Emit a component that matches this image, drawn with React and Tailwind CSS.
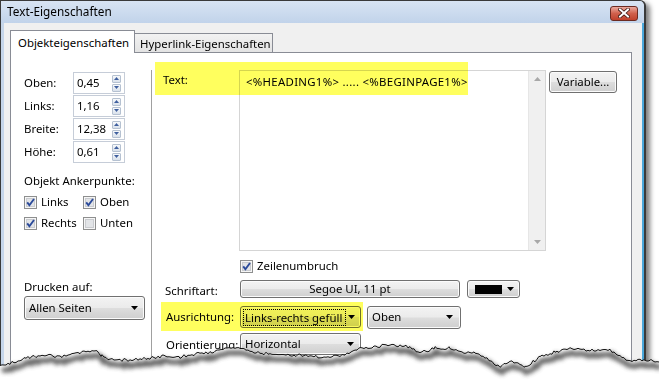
import React from 'react'

const btn = 'border border-[#707070] rounded-[3px] bg-[linear-gradient(#f3f3f3,#ebebeb_48%,#dddddd_52%,#cfcfcf)] shadow-[inset_0_0_0_1px_#fbfbfb]'

function Arrow() {
  return (
    <svg width="7" height="4" viewBox="0 0 7 4" className="shrink-0">
      <polygon points="0,0 7,0 3.5,4" fill="#000" />
    </svg>
  )
}

function Checkbox({ checked }) {
  return (
    <svg width="13" height="13" viewBox="0 0 13 13" className="shrink-0">
      <rect x="0.5" y="0.5" width="12" height="12" fill="#f6f6f6" stroke="#8e8f8f" />
      <rect x="2.5" y="2.5" width="8" height="8" fill="#e2e4e7" stroke="#c9cbcf" />
      {checked && <path d="M3.2 6.4 5.4 9.2 10 3" fill="none" stroke="#2b4a9a" strokeWidth="1.9" />}
    </svg>
  )
}

function SpinBtn({ up }) {
  return (
    <div className="w-[9px] h-[8px] border border-[#b5c1d1] rounded-[1px] bg-gradient-to-b from-[#f7f9fb] to-[#d9e1eb] flex items-center justify-center">
      <svg width="5" height="3" viewBox="0 0 5 3">
        <polygon points={up ? '0,3 5,3 2.5,0' : '0,0 5,0 2.5,3'} fill="#3f5f9e" />
      </svg>
    </div>
  )
}

function Spin({ label, value }) {
  return (
    <div className="flex items-center h-[22px]">
      <span className="w-[49px]">{label}</span>
      <div className="flex items-center w-[52px] h-[22px] border border-[#c6cdd8] bg-white pl-[3px] pr-[3px]">
        <span className="flex-1">{value}</span>
        <div className="flex flex-col gap-px">
          <SpinBtn up />
          <SpinBtn />
        </div>
      </div>
    </div>
  )
}

function Check({ label, checked, w }) {
  return (
    <div className={`flex items-center gap-[4px] ${w}`}>
      <Checkbox checked={checked} />
      <span>{label}</span>
    </div>
  )
}

function TornEdge() {
  const pts = [
    [0, 367], [10, 363], [20, 360], [30, 357], [45, 355], [60, 357], [80, 353], [95, 350], [102, 356],
    [110, 360], [130, 360], [150, 358], [165, 356], [180, 357], [200, 353], [215, 352], [225, 348],
    [240, 348], [260, 353], [280, 355], [300, 355], [320, 357], [345, 355], [360, 348], [370, 347],
    [390, 345], [410, 347], [420, 353], [435, 348], [450, 348], [460, 352], [475, 352], [490, 360],
    [500, 367], [510, 360], [525, 367], [540, 357], [555, 352], [570, 349], [590, 350], [610, 350],
    [620, 357], [630, 360], [645, 360], [659, 362],
  ]
  const line = []
  for (let i = 0; i < pts.length - 1; i++) {
    const [x0, y0] = pts[i]
    const [x1, y1] = pts[i + 1]
    for (let x = x0; x < x1; x += 2) {
      const t = (x - x0) / (x1 - x0)
      const n = Math.sin(x * 12.9898) * 43758.5453
      const j = (n - Math.floor(n) - 0.5) * 3
      line.push([x, y0 + (y1 - y0) * t + j])
    }
  }
  line.push(pts[pts.length - 1])
  const d = line.map(([x, y], i) => `${i ? 'L' : 'M'}${x.toFixed(1)} ${y.toFixed(1)}`).join(' ')
  const fill = `${d} L659 391 L0 391 Z`
  return (
    <svg className="absolute inset-0 pointer-events-none" width="659" height="391" viewBox="0 0 659 391">
      <defs>
        <filter id="blur" x="-10%" y="-50%" width="120%" height="200%">
          <feGaussianBlur stdDeviation="2.2" />
        </filter>
      </defs>
      <path d={fill} fill="#fff" />
      <path d={d} transform="translate(2 5)" fill="none" stroke="#4a4a4a" strokeWidth="5" opacity="0.85" filter="url(#blur)" />
      <path d={d} fill="none" stroke="#111" strokeWidth="1" />
    </svg>
  )
}

export default function App() {
  return (
    <div className="relative w-[659px] h-[391px] bg-white overflow-hidden font-['Noto_Sans',sans-serif] text-[11.4px] text-black whitespace-nowrap">
      {/* window */}
      <div className="w-[646px] h-[391px] flex flex-col border-l border-t border-[#3a3a3a] border-r-2 rounded-tr-[6px] shadow-[4px_3px_5px_rgba(0,0,0,0.5)] bg-[#c9d9ed]">
        <div className="h-[22px] flex items-center pl-[6px] pr-[6px] rounded-tr-[5px] bg-gradient-to-b from-[#d8e4f3] to-[#c1d3ea]">
          <span className="flex-1 text-[11.8px]">Text-Eigenschaften</span>
          <div className="w-[28px] h-[15px] mt-[2px] rounded-[3px] border border-[#6b2b22] bg-gradient-to-b from-[#e9a99e] via-[#d0604c] to-[#c0412c] flex items-center justify-center">
            <svg width="12" height="10" viewBox="0 0 12 10">
              <path d="M2 1.5 10 8.5 M10 1.5 2 8.5" stroke="#3a1510" strokeWidth="3.6" strokeLinecap="square" />
              <path d="M2 1.5 10 8.5 M10 1.5 2 8.5" stroke="#fff" strokeWidth="2" strokeLinecap="square" />
            </svg>
          </div>
        </div>
        <div className="flex-1 flex min-h-0">
          <div className="w-[3px] bg-[#c6d6ea]" />
          <div className="flex-1 flex flex-col bg-[#f0f0f0] pl-[6px] pt-[7px] pr-[10px]">
            {/* tabs */}
            <div className="flex items-end h-[22px]">
              <div className="relative z-10 h-[23px] -mb-px w-[125px] border border-b-0 border-[#898c95] bg-white pl-[7px] pt-[3px]">
                Objekteigenschaften
              </div>
              <div className="h-[19px] w-[138px] border-t border-r border-[#898c95] bg-gradient-to-b from-[#f2f2f2] to-[#e3e3e3] pl-[5px] pt-[1px]">
                Hyperlink-Eigenschaften
              </div>
            </div>
            {/* panel */}
            <div className="flex-1 flex border border-[#898c95] bg-white">
              {/* left column */}
              <div className="w-[140px] flex flex-col pl-[13px] pt-[19px]">
                <div className="flex flex-col gap-px">
                  <Spin label="Oben:" value="0,45" />
                  <Spin label="Links:" value="1,16" />
                  <Spin label="Breite:" value="12,38" />
                  <Spin label="Höhe:" value="0,61" />
                </div>
                <div className="h-[16px] mt-[10px] flex items-center">Objekt Ankerpunkte:</div>
                <div className="flex flex-col gap-px mt-[3px]">
                  <div className="flex h-[20px]">
                    <Check label="Links" checked w="w-[59px]" />
                    <Check label="Oben" checked w="w-[60px]" />
                  </div>
                  <div className="flex h-[20px]">
                    <Check label="Rechts" checked w="w-[59px]" />
                    <Check label="Unten" w="w-[60px]" />
                  </div>
                </div>
                <div className="h-[16px] mt-[46px] flex items-center">Drucken auf:</div>
                <div className={`mt-px w-[121px] h-[24px] flex items-center pl-[4px] pr-[6px] ${btn}`}>
                  <span className="flex-1">Allen Seiten</span>
                  <Arrow />
                </div>
              </div>
              <div className="w-px bg-[#a0a0a0] mt-[17px]" />
              {/* right column */}
              <div className="flex-1 flex flex-col pt-[17px]">
                <div className="flex items-start">
                  <div className="w-[87px] pl-[11px] pt-[1px] h-[18px] flex items-center">Text:</div>
                  <div className="w-[307px] h-[181px] border border-[#d5d5d5] flex">
                    <div className="flex-1 pl-[6px] pt-[2px] tracking-[0.3px]">&lt;%HEADING1%&gt; ..... &lt;%BEGINPAGE1%&gt;</div>
                    <div className="w-[17px] bg-[#f0f0f0] border-l border-[#e6e6e6] flex flex-col items-center justify-between py-[6px]">
                      <svg width="7" height="4" viewBox="0 0 7 4"><polygon points="0,4 7,4 3.5,0" fill="#a8a8a8" /></svg>
                      <svg width="7" height="4" viewBox="0 0 7 4"><polygon points="0,0 7,0 3.5,4" fill="#a8a8a8" /></svg>
                    </div>
                  </div>
                  <div className={`ml-[3px] mt-px w-[68px] h-[22px] flex items-center justify-center ${btn}`}>Variable...</div>
                </div>
                <div className="flex items-center h-[20px] mt-[5px] pl-[88px] gap-[4px]">
                  <Checkbox checked />
                  <span>Zeilenumbruch</span>
                </div>
                <div className="flex items-center mt-[4px] h-[18px]">
                  <div className="w-[88px] pl-[13px] pt-[3px]">Schriftart:</div>
                  <div className={`w-[220px] h-[18px] flex items-center justify-center ${btn}`}>Segoe UI, 11 pt</div>
                  <div className={`ml-[7px] w-[53px] h-[18px] flex items-center pl-[7px] gap-[5px] ${btn}`}>
                    <div className="w-[27px] h-[9px] bg-black" />
                    <Arrow />
                  </div>
                </div>
                <div className="flex items-center mt-[8px] h-[22px]">
                  <div className="w-[88px] pl-[14px]">Ausrichtung:</div>
                  <div className={`w-[121px] h-[22px] flex items-center pl-[2px] pr-[5px] gap-[2px] ${btn}`}>
                    <span className="flex-1 h-[17px] border border-dotted border-black pl-px leading-[15px]">Links-rechts gefüll</span>
                    <Arrow />
                  </div>
                  <div className={`ml-[6px] w-[94px] h-[23px] flex items-center pl-[4px] pr-[7px] ${btn}`}>
                    <span className="flex-1">Oben</span>
                    <Arrow />
                  </div>
                </div>
                <div className="flex items-center mt-[5px] h-[22px]">
                  <div className="w-[88px] pl-[14px] pt-px">Orientierung:</div>
                  <div className={`w-[121px] h-[22px] flex items-center pl-[4px] pr-[6px] ${btn}`}>
                    <span className="flex-1">Horizontal</span>
                    <Arrow />
                  </div>
                </div>
              </div>
            </div>
          </div>
          <div className="w-[2px] bg-[#4aa8dc]" />
        </div>
      </div>

      {/* yellow highlights */}
      <div className="absolute left-[155px] top-[62px] w-[313px] h-[33px] bg-[#ffff5e] mix-blend-multiply pointer-events-none" />
      <div className="absolute left-[161px] top-[302px] w-[202px] h-[29px] bg-[#ffff5e] mix-blend-multiply pointer-events-none" />

      <TornEdge />
    </div>
  )
}
